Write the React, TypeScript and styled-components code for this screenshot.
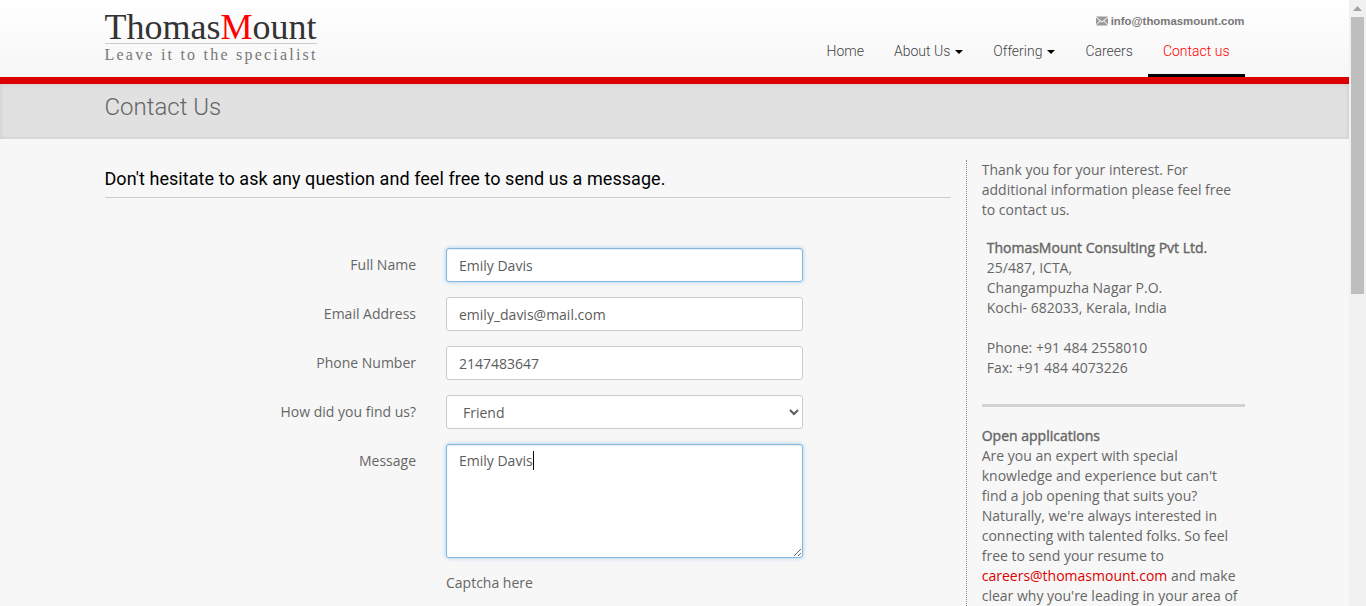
import React from 'react';
import styled, { createGlobalStyle } from 'styled-components';

const GlobalStyle = createGlobalStyle`
  html, body {
    margin: 0;
    height: 606px;
    overflow: hidden;
  }
  * {
    box-sizing: border-box;
  }
  body {
    background: #f7f7f7;
    color: #666;
    font-family: 'Open Sans', sans-serif;
    font-size: 14px;
  }
`;

const Viewport = styled.div`
  display: flex;
  height: 606px;
`;

const Page = styled.div`
  flex: 1;
  min-width: 0;
  overflow: hidden;
`;

const ScrollTrack = styled.div`
  display: flex;
  flex-direction: column;
  width: 17px;
  padding: 0 2px;
  background: #f1f1f1;
`;

const ScrollArrow = styled.div`
  display: flex;
  align-items: center;
  justify-content: center;
  height: 17px;
`;

const ScrollThumb = styled.div`
  height: 277px;
  background: #bebebe;
`;

const Header = styled.header`
  height: 84px;
  border-bottom: 7px solid #dd0000;
  background: linear-gradient(#ffffff, #f6f6f6);
`;

const Container = styled.div`
  display: flex;
  width: 1140px;
  margin: 0 auto;
`;

const HeaderInner = styled(Container)`
  justify-content: space-between;
  height: 77px;
`;

const Logo = styled.div`
  display: flex;
  flex-direction: column;
  width: 213px;
  padding-top: 11px;
  font-family: 'Liberation Serif', serif;
`;

const LogoName = styled.div`
  width: 212px;
  height: 33px;
  border-bottom: 1px solid #ccc;
  color: #333;
  font-size: 36px;
  line-height: 33px;
  white-space: nowrap;
`;

const LogoAccent = styled.span`
  color: #f00;
`;

const LogoTagline = styled.div`
  margin-top: 2px;
  color: #777;
  font-size: 16px;
  line-height: 17px;
  letter-spacing: 2.22px;
  white-space: nowrap;
`;

const HeaderRight = styled.div`
  display: flex;
  flex-direction: column;
  align-items: flex-end;
`;

const MailLine = styled.div`
  display: flex;
  align-items: center;
  gap: 3px;
  height: 41px;
  color: #777;
  font-family: 'Liberation Sans', sans-serif;
  font-size: 11.4px;
  font-weight: 700;
`;

const Nav = styled.nav`
  display: flex;
  height: 36px;
`;

const NavItem = styled.a<{ $active?: boolean }>`
  display: flex;
  align-items: flex-start;
  gap: 5px;
  height: 36px;
  padding: 0 15px;
  border-bottom: 3px solid ${(p) => (p.$active ? '#000' : 'transparent')};
  color: ${(p) => (p.$active ? '#f00' : '#444')};
  font-family: Roboto, sans-serif;
  font-size: 14px;
  font-weight: 300;
  line-height: 20px;
`;

const Caret = styled.span`
  width: 0;
  height: 0;
  margin-top: 9px;
  border-top: 4px solid #000;
  border-right: 4px solid transparent;
  border-left: 4px solid transparent;
`;

const TitleBand = styled.div`
  height: 55px;
  background: #e1e1e1;
  box-shadow: inset 0 0 5px rgba(0, 0, 0, 0.1);
`;

const PageTitle = styled.h1`
  margin: 8px 0 0;
  color: #666;
  font-family: Roboto, sans-serif;
  font-size: 24px;
  font-weight: 300;
  line-height: 30px;
`;

const Content = styled(Container)`
  padding-top: 21px;
`;

const Main = styled.main`
  width: 847px;
`;

const Lead = styled.h2`
  height: 38px;
  margin: 0 0 50px;
  border-bottom: 1px solid #ccc;
  color: #000;
  font-family: Roboto, sans-serif;
  font-size: 18px;
  font-weight: 400;
  letter-spacing: 0.057px;
  line-height: 38px;
`;

const Form = styled.form`
  display: flex;
  flex-direction: column;
  gap: 15px;
`;

const Row = styled.div`
  display: grid;
  grid-template-columns: 311.5px 357px;
  column-gap: 30px;
`;

const Label = styled.label`
  padding-top: 7px;
  color: #666;
  font-size: 14px;
  line-height: 20px;
  text-align: right;
`;

const fieldCss = `
  width: 100%;
  border: 1px solid #ccc;
  border-radius: 3px;
  background: #fff;
  color: #5c5c5c;
  font-family: 'Open Sans', sans-serif;
  font-size: 14px;
`;

const focusCss = `
  outline: none;
  border-color: #80b8e6;
  box-shadow: inset 0 1px 1px rgba(0, 0, 0, 0.075), 0 0 4px rgba(102, 175, 233, 0.6);
`;

const Input = styled.input<{ $focused?: boolean }>`
  ${fieldCss}
  display: block;
  height: 34px;
  padding: 6px 12px;
  ${(p) => p.$focused && focusCss}
`;

const Select = styled.select`
  ${fieldCss}
  display: block;
  height: 34px;
  padding: 6px 12px;
`;

const MessageBox = styled.div`
  position: relative;
`;

const TextArea = styled.textarea`
  ${fieldCss}
  ${focusCss}
  display: block;
  height: 114px;
  padding: 6px 12px;
`;

const TextCursor = styled.span`
  position: absolute;
  top: 7px;
  left: 86.5px;
  width: 1px;
  height: 19px;
  background: #000;
`;

const Captcha = styled.div`
  grid-column: 2;
  color: #666;
  line-height: 20px;
`;

const Sidebar = styled.aside`
  width: 279px;
  height: 600px;
  margin-left: 15px;
  padding-left: 15px;
  border-left: 1px dotted #888;
  line-height: 20px;
`;

const Para = styled.p`
  margin: 0;
`;

const Address = styled.div`
  margin-top: 18px;
  padding-left: 5px;
`;

const Strong = styled.div`
  font-weight: 400;
  -webkit-text-stroke: 0.4px #666;
`;

const Divider = styled.hr`
  height: 3px;
  margin: 26px 0 19px;
  border: 0;
  background: #d3d3d3;
`;

const Link = styled.a`
  color: #dd0000;
`;

const Spacer = styled.div`
  height: 20px;
`;

export default function App() {
  return (
    <Viewport>
      <GlobalStyle />
      <Page>
        <Header>
          <HeaderInner>
            <Logo>
              <LogoName>
                Thomas<LogoAccent>M</LogoAccent>ount
              </LogoName>
              <LogoTagline>Leave it to the specialist</LogoTagline>
            </Logo>
            <HeaderRight>
              <MailLine>
                <svg width="12" height="10" viewBox="0 0 13 10">
                  <path d="M0 0h13L6.5 5.5z" fill="#999" />
                  <path d="M0 1.2v7.6l4-4.2zM13 1.2v7.6l-4-4.2zM4.8 5.3 6.5 6.8l1.7-1.5L13 10H0z" fill="#999" />
                </svg>
                info@thomasmount.com
              </MailLine>
              <Nav>
                <NavItem>Home</NavItem>
                <NavItem>
                  About Us <Caret />
                </NavItem>
                <NavItem>
                  Offering <Caret />
                </NavItem>
                <NavItem>Careers</NavItem>
                <NavItem $active>Contact us</NavItem>
              </Nav>
            </HeaderRight>
          </HeaderInner>
        </Header>
        <TitleBand>
          <Container>
            <PageTitle>Contact Us</PageTitle>
          </Container>
        </TitleBand>
        <Content>
          <Main>
            <Lead>Don't hesitate to ask any question and feel free to send us a message.</Lead>
            <Form>
              <Row>
                <Label>Full Name</Label>
                <Input $focused defaultValue="Emily Davis" />
              </Row>
              <Row>
                <Label>Email Address</Label>
                <Input defaultValue="emily_davis@mail.com" />
              </Row>
              <Row>
                <Label>Phone Number</Label>
                <Input defaultValue="2147483647" />
              </Row>
              <Row>
                <Label>How did you find us?</Label>
                <Select defaultValue="Friend">
                  <option>Friend</option>
                </Select>
              </Row>
              <Row>
                <Label>Message</Label>
                <MessageBox>
                  <TextArea defaultValue="Emily Davis" />
                  <TextCursor />
                </MessageBox>
              </Row>
              <Row>
                <Captcha>Captcha here</Captcha>
              </Row>
            </Form>
          </Main>
          <Sidebar>
            <Para>
              Thank you for your interest. For additional information please feel free to contact us.
            </Para>
            <Address>
              <Strong>ThomasMount Consulting Pvt Ltd.</Strong>
              25/487, ICTA,
              <br />
              Changampuzha Nagar P.O.
              <br />
              Kochi- 682033, Kerala, India
              <Spacer />
              Phone: +91 484 2558010
              <br />
              Fax: +91 484 4073226
            </Address>
            <Divider />
            <Strong>Open applications</Strong>
            <Para>
              Are you an expert with special knowledge and experience but can't find a job opening that
              suits you? Naturally, we're always interested in connecting with talented folks. So feel
              free to send your resume to <Link>careers@thomasmount.com</Link> and make clear why you're
              leading in your area of
            </Para>
          </Sidebar>
        </Content>
      </Page>
      <ScrollTrack>
        <ScrollArrow>
          <svg width="9" height="5" viewBox="0 0 9 5">
            <path d="M4.5 0 9 5H0z" fill="#a3a3a3" />
          </svg>
        </ScrollArrow>
        <ScrollThumb />
      </ScrollTrack>
    </Viewport>
  );
}
